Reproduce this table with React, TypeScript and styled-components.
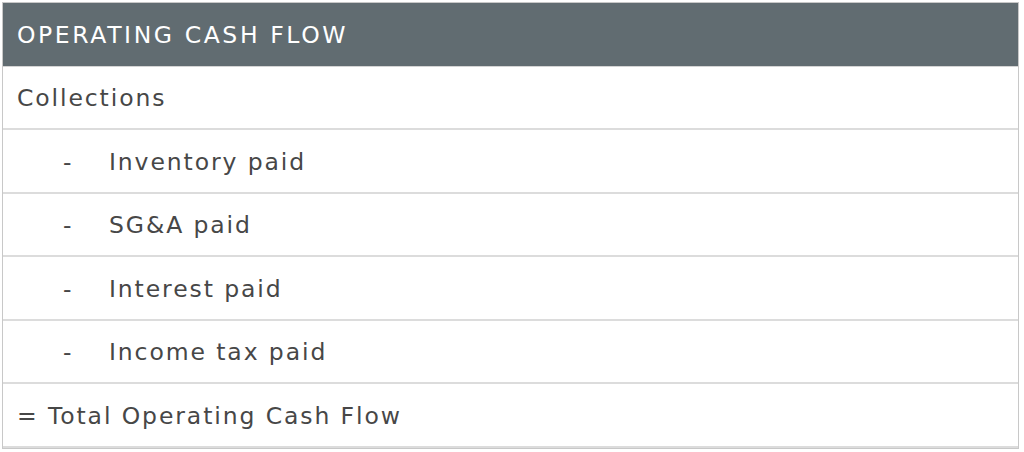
import React from "react";
import styled, { createGlobalStyle } from "styled-components";

const Global = createGlobalStyle`
  html, body { margin: 0; padding: 0; background: #ffffff; }
  body { font-family: "DejaVu Sans", "Liberation Sans", sans-serif; }
`;

const Page = styled.div`
  padding: 2px 5px 0 2px;
  width: 1024px;
  box-sizing: border-box;
`;

const Table = styled.div`
  border: 1px solid #c8c8c8;
  display: flex;
  flex-direction: column;
`;

const Header = styled.div`
  background: #616c71;
  color: #ffffff;
  height: 63.5px;
  display: flex;
  align-items: center;
  padding-left: 14px;
  padding-top: 1px;
  box-sizing: border-box;
  font-size: 23.5px;
  letter-spacing: 2.6px;
  border-bottom: 1.5px solid #d4d4d4;
`;

const Row = styled.div`
  height: 63.5px;
  display: flex;
  align-items: center;
  padding-left: 14px;
  padding-top: 2px;
  box-sizing: border-box;
  font-size: 23.5px;
  letter-spacing: 1.9px;
  color: #474747;
  border-bottom: 2px solid #dcdcdc;
`;

const Dash = styled.span`
  width: 46px;
  margin-left: 46px;
`;

const rows: { text: string; sub?: boolean }[] = [
  { text: "Collections" },
  { text: "Inventory paid", sub: true },
  { text: "SG&A paid", sub: true },
  { text: "Interest paid", sub: true },
  { text: "Income tax paid", sub: true },
  { text: "= Total Operating Cash Flow" },
];

export default function App() {
  return (
    <>
      <Global />
      <Page>
        <Table>
          <Header>OPERATING CASH FLOW</Header>
          {rows.map((r) => (
            <Row key={r.text}>
              {r.sub && <Dash>-</Dash>}
              {r.text}
            </Row>
          ))}
        </Table>
      </Page>
    </>
  );
}
